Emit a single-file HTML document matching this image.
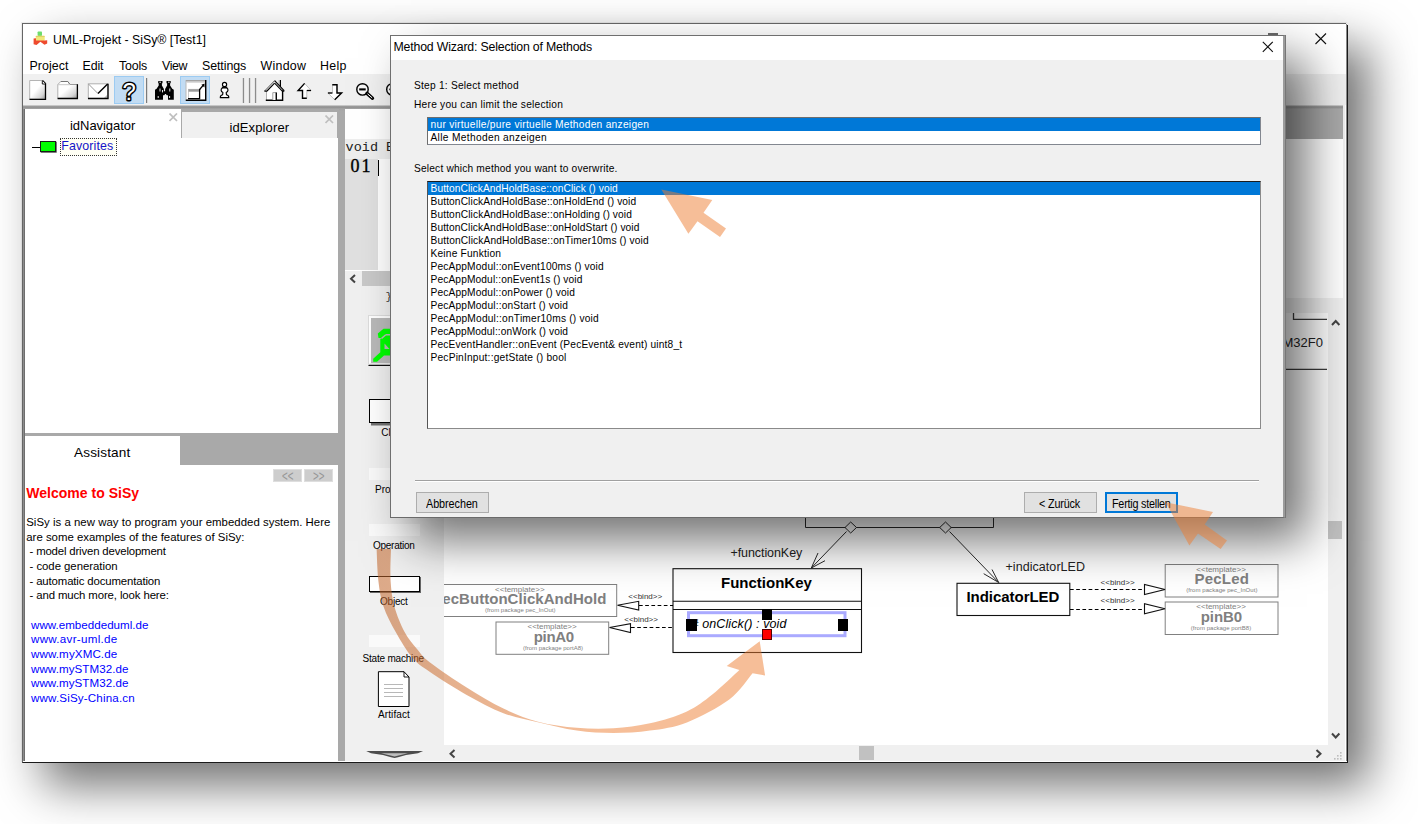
<!DOCTYPE html>
<html lang="en">
<head>
<meta charset="utf-8">
<title>UML-Projekt - SiSy</title>
<style>
html,body{margin:0;padding:0;background:#fff;}
body{width:1418px;height:824px;overflow:hidden;position:relative;font-family:"Liberation Sans",sans-serif;color:#000;}
.a{position:absolute;white-space:nowrap;}
.t{position:absolute;white-space:nowrap;line-height:1;transform-origin:0 50%;}
#win{left:22px;top:23px;width:1326px;height:740px;box-sizing:border-box;border:1px solid #666;border-right:1.600px solid #1a1a1a;border-bottom:1.800px solid #1a1a1a;background:#fff;box-shadow:21px 23px 44px rgba(0,0,0,.55),-1px -1px 0 rgba(0,0,0,.06);}
#wsh{left:22px;top:23px;width:1326px;height:740px;}
/* coordinates inside .abs layers are page coordinates */
#L{left:0;top:0;width:1418px;height:824px;}
.ui{font-family:"Liberation Sans",sans-serif;font-size:12px;}
.mn{font-size:12.4px;color:#000;}
.tabt{font-size:13px;}
.body12{font-size:11.4px;}
.lnk{color:#0000ff;font-size:11.6px;left:30px;letter-spacing:.25px;}
.pal{font-size:10px;text-align:center;}
.li{left:431px;font-size:10.200px;}
.dl{font-size:10.200px;left:414px;}
.btn{background:#e1e1e1;border:1px solid #adadad;box-sizing:border-box;font-size:12px;text-align:center;}
.g{color:#808080;}
</style>
</head>
<body>
<div id="win" class="a"></div>
<div id="L" class="a">

<!-- ===== title bar ===== -->
<svg class="a" style="left:32px;top:30px" width="17" height="17" viewBox="32 30 17 17">
  <rect x="37.600" y="31.500" width="4.400" height="4.600" rx=".8" fill="#6ddc6d"/>
  <rect x="35.800" y="35.700" width="8.900" height="5.200" rx=".8" fill="#f0e87a"/>
  <path d="M35.800 36.400h8.900" stroke="#d8c860" stroke-width=".8"/>
  <path d="M33.600 38.600L36 38.300V40.600H44.600L47.200 40.200V43.600L44.500 44.800L40.400 41.800L36.500 45L33.600 44.200Z" fill="#ee4a2e"/>
 </svg>
<div class="t ui" id="ttl" style="left:53.00px;top:34.00px;font-size:12.3px;letter-spacing:-0.013px">UML-Projekt - SiSy® [Test1]</div>
<svg class="a" style="left:1315px;top:33px" width="12" height="12"><path d="M.5 .5l10.500 10.500M11 .5L.5 11" stroke="#111" stroke-width="1.1" fill="none"/></svg>
<div class="a" style="left:1268px;top:33px;width:10px;height:2px;background:#6a6a6a"></div>

<div class="a" style="left:1346.4px;top:22.8px;width:1.8px;height:2.2px;background:#ececec"></div>
<!-- ===== menu ===== -->
<div class="t mn" id="m1" style="left:29.50px;top:59.64px;letter-spacing:0.063px">Project</div>
<div class="t mn" id="m2" style="left:82.50px;top:59.64px;letter-spacing:-0.136px">Edit</div>
<div class="t mn" id="m3" style="left:119.00px;top:59.64px;letter-spacing:-0.182px">Tools</div>
<div class="t mn" id="m4" style="left:162.00px;top:59.64px;letter-spacing:-0.395px">View</div>
<div class="t mn" id="m5" style="left:202.00px;top:59.64px;letter-spacing:-0.082px">Settings</div>
<div class="t mn" id="m6" style="left:260.50px;top:59.64px;letter-spacing:0.276px">Window</div>
<div class="t mn" id="m7" style="left:320.00px;top:59.64px;letter-spacing:0.303px">Help</div>

<!-- ===== toolbar ===== -->
<div class="a" id="tb" style="left:23px;top:74px;width:1323px;height:31px;background:#f0f0f0"></div>
<div class="a" style="left:23px;top:105px;width:1320px;height:6px;background:linear-gradient(#dcdcdc 0,#8c8c8c 30%,#a2a2a2 60%,#a9a9a9 100%)"></div>

<div class="a" style="left:114px;top:76px;width:30px;height:28px;background:#c2dcf3;border:1px solid #9ccbf2;box-sizing:border-box"></div>
<div class="a" style="left:180px;top:76px;width:30px;height:28px;background:#c2dcf3;border:1px solid #9ccbf2;box-sizing:border-box"></div>
<svg class="a" id="tbsvg" style="left:0;top:0" width="420" height="110" viewBox="0 0 420 110">
 <defs>
  <pattern id="hz" width="2" height="2" patternUnits="userSpaceOnUse"><rect width="2" height="2" fill="#fff"/><rect width="1" height="1" fill="#9a9a9a"/><rect x="1" y="1" width="1" height="1" fill="#9a9a9a"/></pattern>
  <linearGradient id="gl" x1="0" y1="0" x2="1" y2="1"><stop offset="0" stop-color="#fff"/><stop offset=".45" stop-color="#fff"/><stop offset=".6" stop-color="#ececec"/><stop offset=".78" stop-color="#d6d6d6"/><stop offset=".9" stop-color="#b4b4b4"/><stop offset="1" stop-color="#8c8c8c"/></linearGradient>
 </defs>
 <!-- new -->
 <path d="M29.700 80.500H42.500L45.500 83.500V99.200H29.700Z" fill="url(#gl)" stroke="#b4b4b4" stroke-width="1"/>
 <path d="M42.500 80.500L45.500 83.500V99.300H29.500" fill="none" stroke="#000" stroke-width="1.3"/>
 <path d="M42.300 80.800V84H45.500" fill="#fff" stroke="#000" stroke-width=".9"/>
 <!-- folder -->
 <path d="M57.800 84.500L60.800 81.500H67.800L70 84.500H77.400V98.400H57.800Z" fill="url(#gl)" stroke="#b0b0b0" stroke-width="1"/>
 <path d="M60.800 81.500H67.800L70 84.500" fill="none" stroke="#777" stroke-width="1"/>
 <path d="M70 84.500H77.400" fill="none" stroke="#9a9a9a" stroke-width="1"/><path d="M77.400 84.200V98.500H57.600" fill="none" stroke="#000" stroke-width="1.3"/>
 <path d="M58 84.700H70" stroke="#c8c8c8" stroke-width="1"/>
 <!-- envelope -->
 <rect x="88.300" y="83.800" width="19.600" height="14.600" fill="#fff" stroke="#b0b0b0" stroke-width="1"/>
 <path d="M104 98L107.500 94.500V98Z" fill="#bdbdbd"/>
 <path d="M88.500 84L98 93.600" stroke="#9a9a9a" stroke-width="1" fill="none"/>
 <path d="M98 93.600L107.600 84" stroke="#000" stroke-width="1.400" fill="none"/>
 <path d="M108 83.800V98.500H88" fill="none" stroke="#000" stroke-width="1.300"/>
 <!-- question mark -->
 <text x="129.300" y="99.800" text-anchor="middle" font-family="Liberation Sans, sans-serif" font-size="24" fill="#fff" stroke="#000" stroke-width="3" stroke-linejoin="round" paint-order="stroke">?</text>
 <!-- sep -->
 <rect x="146" y="78" width="1.200" height="25" fill="#7a7a7a"/>
 <!-- binoculars -->
 <path d="M158.300 81h4.200v2.200h-.6v2.300l2 3.400v2.400h1.200v-2.400l2-3.400v-2.300h-.6V81h4.200v2.200h-.6v2.300l2.100 3.200 1.600 1v10h-5.800v-4.500h-1.300l-.8-1.200h-.8l-.8 1.200h-1.300v4.500H155v-10l1.600-1 2.100-3.200v-2.300h-.6z" fill="#000"/>
 <path d="M159.400 82.200h1.600M168 82.200h1.600M160 88.500v3M158.200 96v2M169.800 88.500v3M169.600 96v2M162.500 90v2.400" stroke="#fff" stroke-width=".9"/>
 <!-- window icon -->
 <rect x="186" y="80.500" width="19.800" height="19.700" fill="#fff" stroke="#b8b8b8" stroke-width="1"/>
 <rect x="186" y="80.300" width="19.600" height="1.300" fill="#9a9a9a"/><rect x="186" y="81.600" width="19.600" height="1.200" fill="#d4d4d4"/>
 <path d="M205.700 80V100.300H185.800" fill="none" stroke="#000" stroke-width="1.400"/>
 <rect x="188.500" y="89.300" width="11" height="9.200" fill="#fff" stroke="#c0c0c0" stroke-width=".8"/>
 <rect x="188.500" y="89.200" width="10.800" height="2.500" fill="#9c9c9c"/>
 <path d="M199.600 89V98.600H188" fill="none" stroke="#000" stroke-width="1.300"/>
 <path d="M199.600 89.500L203.800 84.600" stroke="#000" stroke-width="1.300"/>
 <path d="M204.600 83.600L204.400 87.400L201.400 84.700Z" fill="#000"/>
 <!-- pawn -->
 <g fill="#fff" stroke="#000" stroke-width="1.150" stroke-linejoin="round"><path d="M222.300 88C220.400 89.400 220.900 91.500 222.900 92.600L222.600 94.800C221 95.300 220.200 96.300 220.300 97.600H228.800C228.900 96.300 228.100 95.300 226.500 94.800L226.200 92.600C228.200 91.500 228.700 89.400 226.800 88Z"/><circle cx="224.550" cy="84.400" r="2.100"/><path d="M221.900 87.300H227.200" fill="none" stroke-width="1.300"/></g>
 <!-- separators -->
 <rect x="242.800" y="78" width="1.300" height="25" fill="#8c8c8c"/><rect x="248.900" y="78" width="1.300" height="25" fill="#8c8c8c"/><rect x="254.900" y="78" width="1.300" height="25" fill="#8c8c8c"/>
 <!-- house -->
 <path d="M266.300 90.500L274.600 82L282.700 90.500V100H266.300Z" fill="#fff"/>
 <path d="M266.500 91V100" stroke="#b0b0b0" stroke-width="1"/>
 <path d="M280.400 80V86.800" stroke="#000" stroke-width="1.200"/><path d="M279.100 80.300V85.200" stroke="#999" stroke-width=".8"/>
 <path d="M264.800 90.800L274.600 80.700" stroke="#555" stroke-width="1" fill="none"/>
 <path d="M267 91L274.600 83.200" stroke="#000" stroke-width="1.100" fill="none"/>
 <path d="M274.600 80.700L284.100 90.600" stroke="#000" stroke-width="1.200" fill="none"/>
 <path d="M274.600 83.200L282.300 91.200" stroke="#000" stroke-width="1.100" fill="none"/>
 <path d="M264.400 91.200H267.200M284.300 91H282" stroke="#000" stroke-width="1.300"/>
 <path d="M282.600 91V100.200H265.800" fill="none" stroke="#000" stroke-width="1.400"/>
 <path d="M272.800 100V92.600H276.200V100" fill="#fff" stroke="#999" stroke-width=".9"/>
 <path d="M276.300 92.400V100" stroke="#000" stroke-width="1.300"/>
 <!-- up arrow -->
 <path d="M304.600 83.400L311.200 90.500H306.800V98.300H302.500V90.500H298.100Z" fill="#fff" stroke="#c4c4c4" stroke-width="1"/>
 <path d="M304.600 83.400L298.100 90.500H302.500V98.300H306.800" fill="none" stroke="#000" stroke-width="1.400"/>
 <path d="M306.800 90.500H311" stroke="#000" stroke-width="1.300"/>
 <!-- down arrow -->
 <path d="M332.500 84.700H337V93H341.600L334.700 99.700L327.900 93H332.500Z" fill="#fff" stroke="#c4c4c4" stroke-width="1"/>
 <path d="M332.300 84.700H337V93H341.600L334.700 99.700" fill="none" stroke="#000" stroke-width="1.400"/>
 <path d="M327.900 93H332.400" stroke="#000" stroke-width="1.300"/>
 <!-- zoom out -->
 <circle cx="362.500" cy="89.400" r="5.700" fill="#f6f6f6" stroke="#000" stroke-width="1.400"/>
 <path d="M359.2 89.4H365.7" stroke="#000" stroke-width="2.1"/>
 <path d="M367 93.4L372.5 98.2" stroke="#000" stroke-width="3.4" stroke-linecap="round"/><path d="M367.5 93.8L372.2 97.9" stroke="#fff" stroke-width="1"/>
 <!-- zoom in (hidden mostly) -->
 <circle cx="392.400" cy="89.400" r="5.700" fill="#f6f6f6" stroke="#000" stroke-width="1.400"/>
 <path d="M389.300 89.400H395" stroke="#000" stroke-width="1.700"/>
</svg>


<!-- ===== left dock ===== -->
<div class="a" style="left:23px;top:111px;width:322px;height:651px;background:#a9a9a9"></div>

<div class="a" style="left:25px;top:109px;width:312.700px;height:324px;background:#fff"></div>
<div class="a" style="left:180.700px;top:109px;width:158px;height:29.300px;background:#a9a9a9"></div>
<div class="a" style="left:181.800px;top:111.700px;width:155px;height:26.600px;background:#f0f0f0"></div>
<div class="a" style="left:23px;top:109px;width:1px;height:652px;background:#8c8c8c"></div><div class="a" style="left:24px;top:109px;width:1px;height:652px;background:#6e6e6e"></div>
<div class="t tabt" id="tnav" style="left:70.00px;top:119.25px;letter-spacing:-0.043px">idNavigator</div>
<div class="t tabt" id="texp" style="left:229.40px;top:120.55px;letter-spacing:0.128px">idExplorer</div>
<svg class="a" style="left:169px;top:113px" width="9" height="9"><path d="M.5 .5l7.500 7.500M8 .5L.5 8" stroke="#bfbfbf" stroke-width="1.7" fill="none"/></svg>
<svg class="a" style="left:325px;top:115px" width="9" height="9"><path d="M.5 .5l7.500 7.500M8 .5L.5 8" stroke="#bfbfbf" stroke-width="1.7" fill="none"/></svg>
<!-- tree -->
<div class="a" style="left:32px;top:147px;width:8px;height:1px;background:#000"></div>
<div class="a" style="left:40px;top:141px;width:13.500px;height:9px;background:#00ff00;border:1px solid #1a1a1a;box-shadow:.7px .7px 0 #444"></div>
<div class="a" style="left:60.200px;top:138px;width:55px;height:15.500px;border:1px dotted #333;background:#fffff4;box-sizing:content-box"></div>
<div class="t" id="tfav" style="left:61.25px;top:139.84px;font-size:12.4px;color:#1414c8;letter-spacing:0.124px">Favorites</div>
<!-- assistant -->
<div class="a" style="left:25px;top:436px;width:155px;height:30px;background:#fff"></div>
<div class="a" style="left:25px;top:464.700px;width:312.700px;height:296.300px;background:#fff"></div>
<div class="t" id="tass" style="left:74.00px;top:445.57px;font-size:13.6px;letter-spacing:0.141px">Assistant</div>
<div class="a" style="left:272.700px;top:468.500px;width:29.500px;height:13.600px;background:#cdcdcd;border:1px solid #dedede;box-sizing:border-box"></div>
<div class="a" style="left:303.900px;top:468.500px;width:29.300px;height:13.600px;background:#cdcdcd;border:1px solid #dedede;box-sizing:border-box"></div>
<div class="t" id="nv1" style="transform:scaleX(.7);left:281.80px;top:469.42px;font-size:14px;color:#969696;letter-spacing:0.110px">&lt;&lt;</div>
<div class="t" id="nv2" style="transform:scaleX(.7);left:312.80px;top:469.42px;font-size:14px;color:#969696;letter-spacing:0.110px">&gt;&gt;</div>
<div class="t" id="twel" style="left:26.25px;top:485.51px;font-size:14px;font-weight:bold;color:#ff0000;letter-spacing:0.017px">Welcome to SiSy</div>
<div class="t body12" id="b1" style="left:26.25px;top:517.13px;letter-spacing:0.027px">SiSy is a new way to program your embedded system. Here</div>
<div class="t body12" id="b2" style="left:26.25px;top:531.63px;letter-spacing:0.009px">are some examples of the features of SiSy:</div>
<div class="t body12" id="b3" style="left:29.50px;top:546.38px;letter-spacing:-0.166px">- model driven development</div>
<div class="t body12" id="b4" style="left:29.50px;top:560.88px;letter-spacing:-0.036px">- code generation</div>
<div class="t body12" id="b5" style="left:29.50px;top:575.63px;letter-spacing:-0.141px">- automatic documentation</div>
<div class="t body12" id="b6" style="left:29.50px;top:590.13px;letter-spacing:-0.117px">- and much more, look here:</div>
<div class="t lnk" id="l1" style="top:618.60px;left:31.00px;letter-spacing:0.009px">www.embeddeduml.de</div>
<div class="t lnk" id="l2" style="top:633.35px;left:31.00px;letter-spacing:0.287px">www.avr-uml.de</div>
<div class="t lnk" id="l3" style="top:648.10px;left:31.00px;letter-spacing:0.106px">www.myXMC.de</div>
<div class="t lnk" id="l4" style="top:662.60px;left:31.00px;letter-spacing:0.062px">www.mySTM32.de</div>
<div class="t lnk" id="l5" style="top:677.35px;left:31.00px;letter-spacing:0.062px">www.mySTM32.de</div>
<div class="t lnk" id="l6" style="top:691.85px;left:31.00px;letter-spacing:0.159px">www.SiSy-China.cn</div>


<!-- ===== centre ===== -->

<div class="a" style="left:345px;top:109px;width:998px;height:30px;background:#a9a9a9"></div>
<div class="a" style="left:345px;top:109px;width:160px;height:30px;background:#fff"></div>
<div class="a" style="left:345px;top:139px;width:700px;height:20px;background:#eeeeee"></div><div class="a" style="left:1045px;top:139px;width:298px;height:20px;background:#fff"></div>
<div class="a" style="left:345px;top:159px;width:998px;height:111px;background:#fff"></div>
<div class="a" style="left:345px;top:159px;width:33px;height:110.500px;background:#e0e0e0"></div>
<div class="a" style="left:345px;top:269.500px;width:998px;height:1px;background:#fff"></div>
<div class="a" style="left:345px;top:270.500px;width:700px;height:15.500px;background:#f0f0f0"></div><div class="a" style="left:1045px;top:270.500px;width:298px;height:15.500px;background:#fff"></div>
<div class="a" style="left:362.300px;top:271px;width:700px;height:14.700px;background:#c8c8c8"></div>
<svg class="a" style="left:349px;top:274px" width="8" height="10"><path d="M6 1L2 4.700L6 8.400" fill="none" stroke="#444" stroke-width="2"/></svg>
<div class="t" id="evoid" style="left:345.600px;top:141.200px;font-family:'Liberation Mono',monospace;font-size:13.500px;color:#222">void ButtonClick</div>
<div class="t" id="e01" style="left:350.60px;top:156.98px;font-family:'Liberation Serif',serif;font-size:18px;-webkit-text-stroke:.35px #000;letter-spacing:1.800px">01</div>
<div class="a" style="left:378px;top:159.500px;width:1px;height:16px;background:#000"></div>
<!-- palette + diagram base -->
<div class="a" style="left:345px;top:286px;width:998px;height:27px;background:#f0f0f0"></div><div class="a" style="left:1045px;top:286px;width:298px;height:12px;background:#fff"></div>
<div class="a" style="left:345px;top:313px;width:99px;height:448px;background:#f0f0f0"></div>
<div class="a" style="left:444px;top:313px;width:884px;height:432px;background:#fff"></div>
<div class="a" style="left:1328px;top:313px;width:17px;height:448px;background:#f0f0f0"></div>
<div class="a" style="left:444px;top:745px;width:884px;height:16px;background:#f0f0f0"></div>
<div class="a" style="left:1343px;top:74px;width:2px;height:686px;background:#f0f0f0"></div><div class="a" style="left:1345.500px;top:24px;width:.9px;height:737px;background:#8a8a8a"></div><div class="a" style="left:23px;top:760.700px;width:1323px;height:.5px;background:#fff"></div>
<div class="t" style="left:385.400px;top:292px;font-family:'Liberation Mono',monospace;font-size:11px;color:#333">}</div>
<!-- green run button -->
<div class="a" style="left:367.600px;top:314.800px;width:40px;height:51.600px;background:#b9b9b9;border-top:1px solid #dcdcdc;border-left:1px solid #dcdcdc;border-bottom:1.500px solid #111;border-right:1.500px solid #111;box-sizing:border-box"></div>
<div class="a" style="left:368.600px;top:315.800px;width:38px;height:48px;border-top:2.500px solid #fff;border-left:2.500px solid #fff;border-bottom:1px solid #e8e8e8;box-sizing:border-box"></div>
<svg class="a" style="left:368px;top:320px" width="40" height="46" viewBox="368 320 40 46"><g fill="#00ff00" stroke="none"><path d="M377.800 333.600L383.500 328.700H396V334H386L381.500 338H378.500Z"/><path d="M380.300 339L384.500 335.500H396V355.500H384L377 361.800H373.200V358.800L380.300 352.300Z"/></g><path d="M384.500 343.500L389.500 349H384.500Z" fill="#b9b9b9"/><path d="M381.500 338.500L385.500 335" stroke="#b9b9b9" stroke-width="1.500"/></svg>
<!-- palette items -->
<div class="a" style="left:368.500px;top:398.800px;width:51px;height:24.500px;background:#fff;border:1.200px solid #000;box-sizing:border-box;box-shadow:2px 2.500px 0 #707070"></div>
<div class="t pal" id="pcl" style="left:381.25px;top:428.08px;letter-spacing:-0.064px">Class</div>
<div class="a" style="left:369px;top:467.500px;width:50.500px;height:12px;background:#fafafa"></div>
<div class="t pal" id="ppr" style="left:375.00px;top:484.83px;letter-spacing:0.030px">Property</div>
<div class="a" style="left:369px;top:523.700px;width:50.500px;height:12px;background:#fafafa"></div>
<div class="t pal" id="pop" style="left:373.00px;top:541.33px;letter-spacing:-0.263px">Operation</div>
<div class="a" style="left:368.700px;top:575.500px;width:51.300px;height:16.500px;background:#fff;border:1px solid #000;box-sizing:border-box;box-shadow:1px 1px 0 #666"></div>
<div class="t pal" id="pob" style="left:380.00px;top:597.33px;letter-spacing:-0.225px">Object</div>
<div class="a" style="left:369px;top:635px;width:50.500px;height:12px;background:#fafafa"></div>
<div class="t pal" id="psm" style="left:362.50px;top:653.58px;letter-spacing:-0.197px">State machine</div>
<svg class="a" style="left:376px;top:669px" width="36" height="40" viewBox="376 669 36 40">
 <path d="M378.400 671.700H404L409 677V706.500H378.400Z" fill="#fff" stroke="#000" stroke-width="1"/>
 <path d="M404 671.700V677H409" fill="none" stroke="#000" stroke-width=".9"/>
 <path d="M384 684.500H403M384 688.500H403M384 692.500H403M384 696.500H403" stroke="#b8b8b8" stroke-width="1"/>
</svg>
<div class="t pal" id="par" style="left:378.00px;top:709.58px;letter-spacing:0.094px">Artifact</div>
<svg class="a" style="left:364px;top:749px" width="62" height="10" viewBox="364 749 62 10"><path d="M366.200 750.900H423.100L418 753.200L406 755L398 757.300L394.600 757.900L391 757.300L383 755L371 753.200Z" fill="#4c4c4c"/><path d="M381 753.300H408L398.500 755.500L394.600 756.500L390.500 755.500Z" fill="#bdbdbd"/></svg>
<!-- scrollbars -->
<svg class="a" style="left:448px;top:748.500px" width="8" height="10"><path d="M6.500 1L2.500 4.700L6.500 8.400" fill="none" stroke="#444" stroke-width="2"/></svg>
<svg class="a" style="left:1315px;top:748.500px" width="8" height="10"><path d="M1.500 1L5.500 4.700L1.500 8.400" fill="none" stroke="#444" stroke-width="2"/></svg>
<svg class="a" style="left:1331px;top:732px" width="10" height="8"><path d="M1 1.500L4.700 5.500L8.400 1.500" fill="none" stroke="#444" stroke-width="2"/></svg>
<svg class="a" style="left:1331px;top:319px" width="10" height="8"><path d="M1 6L4.700 2L8.400 6" fill="none" stroke="#444" stroke-width="2"/></svg>
<div class="a" style="left:1328.300px;top:521.300px;width:14.200px;height:17.500px;background:#c1c1c1"></div>
<div class="a" style="left:859px;top:746px;width:15px;height:14px;background:#c1c1c1"></div>
<svg class="a" style="left:1332px;top:750px" width="12" height="12"><g fill="#bdbdbd"><rect x="8" y="2" width="1.600" height="1.600"/><rect x="5" y="5" width="1.600" height="1.600"/><rect x="8" y="5" width="1.600" height="1.600"/><rect x="2" y="8" width="1.600" height="1.600"/><rect x="5" y="8" width="1.600" height="1.600"/><rect x="8" y="8" width="1.600" height="1.600"/></g></svg>

<svg class="a" id="dgsvg" style="left:444px;top:0" width="884" height="824" viewBox="444 0 884 824">
 <g fill="none" stroke="#2a2a2a" stroke-width="1">
  <path d="M805.500 500V527.500H993.500V500"/>
  <path d="M846.500 531.500L811.300 568M811.300 568L818 553M811.300 568L825 560.700"/>
  <path d="M949.500 531.500L998.700 582.500M998.700 582.500L992 569.500M998.700 582.500L983.700 573.700"/>
  <path d="M845 527.500L850.700 522L856.500 527.500L850.700 533Z" fill="#fff"/>
  <path d="M939.700 527.500L945.500 522L951.200 527.500L945.500 533Z" fill="#fff"/>
  <path d="M1293.5 313V319.4H1327M1286 369.4H1327" stroke="#3a3a3a" stroke-width="1.3"/>
 </g>
 <!-- FunctionKey -->
 <g fill="#fff" stroke="#111" stroke-width="1.100">
  <rect x="673" y="568.700" width="188.500" height="83.800"/>
  <path d="M673 601.300H861.500M673 609.500H861.500" fill="none"/>
  <rect x="957" y="583.300" width="112.800" height="32.200"/>
 </g>
 <rect x="688.500" y="612.700" width="156.500" height="23" fill="none" stroke="#aaaaff" stroke-width="3"/>
 <!-- template boxes -->
 <g fill="#fff" stroke="#808080" stroke-width="1">
  <rect x="422.500" y="584.500" width="194.200" height="32"/>
  <rect x="496" y="622" width="112.700" height="32.300"/>
  <rect x="1165.200" y="564.500" width="112.800" height="32.500"/>
  <rect x="1165.200" y="602" width="112.800" height="32.500"/>
 </g>
 <!-- bind arrows -->
 <g fill="none" stroke="#111" stroke-width="1.100">
  <path d="M639 605.500H673M631 627.500H673M1070 589.500H1144.500M1070 609.500H1144.500" stroke="#000" stroke-width="1" stroke-dasharray="3.700 2.500"/>
  <path d="M617.500 605.300L638.700 601.300V610Z" fill="#fff"/>
  <path d="M609.500 627.500L630.500 623.700V632.500Z" fill="#fff"/>
  <path d="M1165 589.500L1144.500 584.500V594.500Z" fill="#fff"/>
  <path d="M1165 608.800L1144.500 603.800V613.800Z" fill="#fff"/>
 </g>
</svg>
<div class="t" id="dfk" style="left:730.50px;top:547.23px;font-size:12.500px;color:#222;letter-spacing:-0.079px">+functionKey</div>
<div class="t" id="dFK" style="left:721.00px;top:574.97px;font-size:15px;font-weight:bold;letter-spacing:0.001px">FunctionKey</div>
<div class="t" id="doc" style="left:691.50px;top:617.98px;font-size:12.500px;font-style:italic;letter-spacing:0.110px"># onClick() : void</div>
<div class="t" id="dil" style="left:1005.50px;top:561.23px;font-size:12.500px;color:#222;letter-spacing:0.055px">+indicatorLED</div>
<div class="t" id="dIL" style="left:966.50px;top:589.37px;font-size:15px;font-weight:bold;letter-spacing:-0.046px">IndicatorLED</div>
<div class="t g" id="dpl" style="left:1194.50px;top:570.52px;font-size:15px;font-weight:bold;letter-spacing:0.211px">PecLed</div>
<div class="t g" id="dpb" style="left:1200.75px;top:608.97px;font-size:15px;font-weight:bold;letter-spacing:-0.081px">pinB0</div>
<div class="t g" id="dpa" style="left:533.75px;top:629.27px;font-size:15px;font-weight:bold;letter-spacing:-0.331px">pinA0</div>
<div class="a" style="left:444px;top:580px;width:180px;height:40px;overflow:hidden"><div class="t g" id="dpc" style="left:-11.75px;top:10.72px;font-size:15px;font-weight:bold;letter-spacing:0.041px">PecButtonClickAndHold</div></div>
<div class="t g" id="t1" style="left:495.00px;top:585.86px;font-size:8px;letter-spacing:0.027px">&lt;&lt;template&gt;&gt;</div>
<div class="t g" id="t2" style="left:527.50px;top:623.36px;font-size:8px;letter-spacing:-0.018px">&lt;&lt;template&gt;&gt;</div>
<div class="t g" id="t3" style="left:1196.25px;top:565.86px;font-size:8px;letter-spacing:0.027px">&lt;&lt;template&gt;&gt;</div>
<div class="t g" id="t4" style="left:1196.25px;top:603.36px;font-size:8px;letter-spacing:0.027px">&lt;&lt;template&gt;&gt;</div>
<div class="t g" id="f1" style="left:485.00px;top:607.15px;font-size:6px;letter-spacing:0.035px">(from package pec_InOut)</div>
<div class="t g" id="f2" style="left:523.00px;top:644.65px;font-size:6px;letter-spacing:0.015px">(from package portA8)</div>
<div class="t g" id="f3" style="left:1186.25px;top:587.15px;font-size:6px;letter-spacing:0.067px">(from package pec_InOut)</div>
<div class="t g" id="f4" style="left:1190.75px;top:624.65px;font-size:6px;letter-spacing:0.040px">(from package portB8)</div>
<div class="t" id="bd1" style="left:628.25px;top:593.36px;font-size:8px;color:#333;letter-spacing:0.016px">&lt;&lt;bind&gt;&gt;</div>
<div class="t" id="bd2" style="left:624.25px;top:615.86px;font-size:8px;color:#333;letter-spacing:-0.020px">&lt;&lt;bind&gt;&gt;</div>
<div class="t" id="bd3" style="left:1100.50px;top:578.86px;font-size:8px;color:#333;letter-spacing:0.051px">&lt;&lt;bind&gt;&gt;</div>
<div class="t" id="bd4" style="left:1100.50px;top:597.11px;font-size:8px;color:#333;letter-spacing:0.051px">&lt;&lt;bind&gt;&gt;</div>
<div class="t" id="dm32" style="left:1266.00px;top:336.40px;font-size:13px;color:#222;letter-spacing:-0.024px">STM32F0</div>
<!-- handles -->
<div class="a" style="left:686.300px;top:619.300px;width:11.200px;height:11.500px;background:#000"></div>
<div class="a" style="left:762px;top:609.300px;width:10px;height:10.700px;background:#000"></div>
<div class="a" style="left:837.500px;top:619.300px;width:10.500px;height:11.500px;background:#000"></div>
<div class="a" style="left:762px;top:629.300px;width:10px;height:10.700px;background:#ff0000;border:1px solid #500;box-sizing:border-box"></div>



<!-- ===== dialog ===== -->

<div class="a" id="dlg" style="left:390px;top:35px;width:896px;height:483px;background:#f0f0f0;box-shadow:21px 23px 44px rgba(0,0,0,.55)"></div>
<div class="a" style="left:390px;top:35px;width:896px;height:483px;border:1px solid #6f6f6f;border-right:3px solid #9b9b9b;border-bottom:1px solid #6a6a6a;box-sizing:border-box"></div>
<div class="a" style="left:1285px;top:35px;width:1px;height:483px;background:#777"></div>
<div class="a" style="left:391px;top:36px;width:892px;height:24px;background:#fff"></div>
<div class="t ui" id="dttl" style="left:393.50px;top:41.00px;font-size:12.300px;letter-spacing:-0.168px">Method Wizard: Selection of Methods</div>
<svg class="a" style="left:1262px;top:41px" width="12" height="12"><path d="M.8 .8l10 10M10.800 .8L.8 10.800" stroke="#111" stroke-width="1.100" fill="none"/></svg>
<div class="t dl" id="ds1" style="top:81.10px;left:414.00px;letter-spacing:0.221px">Step 1: Select method</div>
<div class="t dl" id="ds2" style="top:100.10px;left:414.00px;letter-spacing:0.237px">Here you can limit the selection</div>
<div class="t dl" id="ds3" style="top:164.10px;left:414.00px;letter-spacing:0.181px">Select which method you want to overwrite.</div>
<!-- list 1 -->
<div class="a" style="left:427px;top:116.500px;width:834px;height:28px;background:#fff;border:1px solid #828790;border-top-color:#6e6e6e;border-left-color:#6e6e6e;box-sizing:border-box"></div>
<div class="a" style="left:428px;top:117.500px;width:832px;height:13px;background:#0078d7"></div>
<div class="t li" id="q0" style="left:430.50px;top:120.25px;color:#fff;letter-spacing:0.273px">nur virtuelle/pure virtuelle Methoden anzeigen</div>
<div class="t li" id="q1" style="left:430.50px;top:133.25px;letter-spacing:0.326px">Alle Methoden anzeigen</div>
<!-- list 2 -->
<div class="a" style="left:427px;top:180.500px;width:834px;height:248.500px;background:#fff;border:1px solid #8a8a8a;border-top:1.300px solid #1c1c1c;border-left-color:#555;box-sizing:border-box"></div>
<div class="a" style="left:428px;top:181.500px;width:832px;height:13px;background:#0078d7"></div>
<div class="t li" id="r0" style="left:430.50px;top:183.60px;color:#fff;letter-spacing:0.083px">ButtonClickAndHoldBase::onClick () void</div>
<div class="t li" id="r1" style="left:430.50px;top:196.60px;letter-spacing:0.116px">ButtonClickAndHoldBase::onHoldEnd () void</div>
<div class="t li" id="r2" style="left:430.50px;top:209.60px;letter-spacing:0.123px">ButtonClickAndHoldBase::onHolding () void</div>
<div class="t li" id="r3" style="left:430.50px;top:222.60px;letter-spacing:0.107px">ButtonClickAndHoldBase::onHoldStart () void</div>
<div class="t li" id="r4" style="left:430.50px;top:235.60px;letter-spacing:0.135px">ButtonClickAndHoldBase::onTimer10ms () void</div>
<div class="t li" id="r5" style="left:430.50px;top:248.60px;letter-spacing:0.189px">Keine Funktion</div>
<div class="t li" id="r6" style="left:430.50px;top:261.60px;letter-spacing:0.156px">PecAppModul::onEvent100ms () void</div>
<div class="t li" id="r7" style="left:430.50px;top:274.60px;letter-spacing:0.122px">PecAppModul::onEvent1s () void</div>
<div class="t li" id="r8" style="left:430.50px;top:287.60px;letter-spacing:0.148px">PecAppModul::onPower () void</div>
<div class="t li" id="r9" style="left:430.50px;top:300.60px;letter-spacing:0.161px">PecAppModul::onStart () void</div>
<div class="t li" id="r10" style="left:430.50px;top:313.60px;letter-spacing:0.195px">PecAppModul::onTimer10ms () void</div>
<div class="t li" id="r11" style="left:430.50px;top:326.60px;letter-spacing:0.088px">PecAppModul::onWork () void</div>
<div class="t li" id="r12" style="left:430.50px;top:339.60px;letter-spacing:0.165px">PecEventHandler::onEvent (PecEvent&amp; event) uint8_t</div>
<div class="t li" id="r13" style="left:430.50px;top:352.60px;letter-spacing:0.197px">PecPinInput::getState () bool</div>

<!-- footer -->
<div class="a" style="left:415px;top:479.700px;width:844px;height:1px;background:#a0a0a0"></div>
<div class="a" style="left:415px;top:480.700px;width:844px;height:1px;background:#fff"></div>
<div class="a btn" style="left:416.300px;top:492.300px;width:72.500px;height:20.500px"></div>
<div class="a btn" style="left:1024px;top:492.300px;width:72.700px;height:20.500px"></div>
<div class="a btn" style="left:1104.600px;top:492.300px;width:73px;height:20.600px;border:2px solid #0078d7"></div>
<div class="t ui" id="bt1" style="transform:scaleX(.9);left:425.75px;top:497.55px;font-size:12px;letter-spacing:-0.053px">Abbrechen</div>
<div class="t ui" id="bt2" style="transform:scaleX(.9);left:1038.75px;top:497.55px;font-size:12px;letter-spacing:-0.193px">&lt; Zurück</div>
<div class="t ui" id="bt3" style="transform:scaleX(.9);left:1111.75px;top:497.55px;font-size:12px;letter-spacing:-0.254px">Fertig stellen</div>


<!-- ===== overlays ===== -->

<svg class="a" id="ovsvg" style="left:0;top:0" width="1418" height="824" viewBox="0 0 1418 824">
 <defs><linearGradient id="arcg" gradientUnits="userSpaceOnUse" x1="376" y1="0" x2="600" y2="0"><stop offset="0" stop-color="#c0662c" stop-opacity=".56"/><stop offset="1" stop-color="#ed7d31" stop-opacity=".5"/></linearGradient></defs>
 <path fill="url(#arcg)" d="M376.6 549C376.9 554.3 377.2 571.4 378.4 581.0C379.5 590.6 380.6 598.0 383.5 606.5C386.4 615.0 390.9 623.5 395.7 632.0C400.5 640.5 406.6 650.8 412.3 657.5C418.0 664.2 420.9 665.8 430.0 672.0C439.1 678.2 454.5 688.0 466.7 694.9C478.9 701.8 491.5 708.6 503.4 713.2C515.3 717.8 525.8 719.4 538.0 722.3C550.2 725.2 564.2 728.8 576.8 730.6C589.4 732.4 601.3 733.0 613.5 733.0C625.7 733.0 637.8 732.4 650.0 730.6C662.2 728.8 673.7 727.6 686.9 722.4C700.1 717.2 718.3 707.7 729.3 699.5C740.2 691.3 748.7 677.7 752.6 673.3L765.1 675.5L759.7 641.2L726.7 666L739.4 670C734.9 674.1 721.0 687.6 712.3 694.5C703.5 701.4 697.3 706.6 686.9 711.4C676.5 716.2 662.2 720.5 650.0 723.3C637.8 726.1 625.7 727.5 613.5 728.3C601.3 729.0 589.4 728.9 576.8 727.8C564.2 726.7 550.2 724.9 538.0 721.7C525.8 718.5 515.3 714.3 503.4 708.6C491.5 702.9 478.9 695.2 466.7 687.5C454.5 679.8 438.3 668.9 430.0 662.5C421.7 656.1 421.2 654.1 417.0 649.0C412.8 643.9 408.4 639.1 404.6 632.0C400.8 624.9 396.7 615.0 394.4 606.5C392.1 598.0 391.2 590.6 390.6 581.0C390.0 571.4 390.9 554.3 391.0 549.0Z"/>
 <g fill="rgba(237,125,49,.5)">
  <path d="M661.300 189.400L712.300 200L703.500 212.700L726 228.500L720 236.900L697.500 221.200L688.400 233.700Z"/>
  <path d="M1165.600 502.300L1213 512L1204.700 524.400L1227 540.600L1220.600 549L1198 533.500L1189.400 545.600Z"/>
 </g>
</svg>


</div>
</body>
</html>
